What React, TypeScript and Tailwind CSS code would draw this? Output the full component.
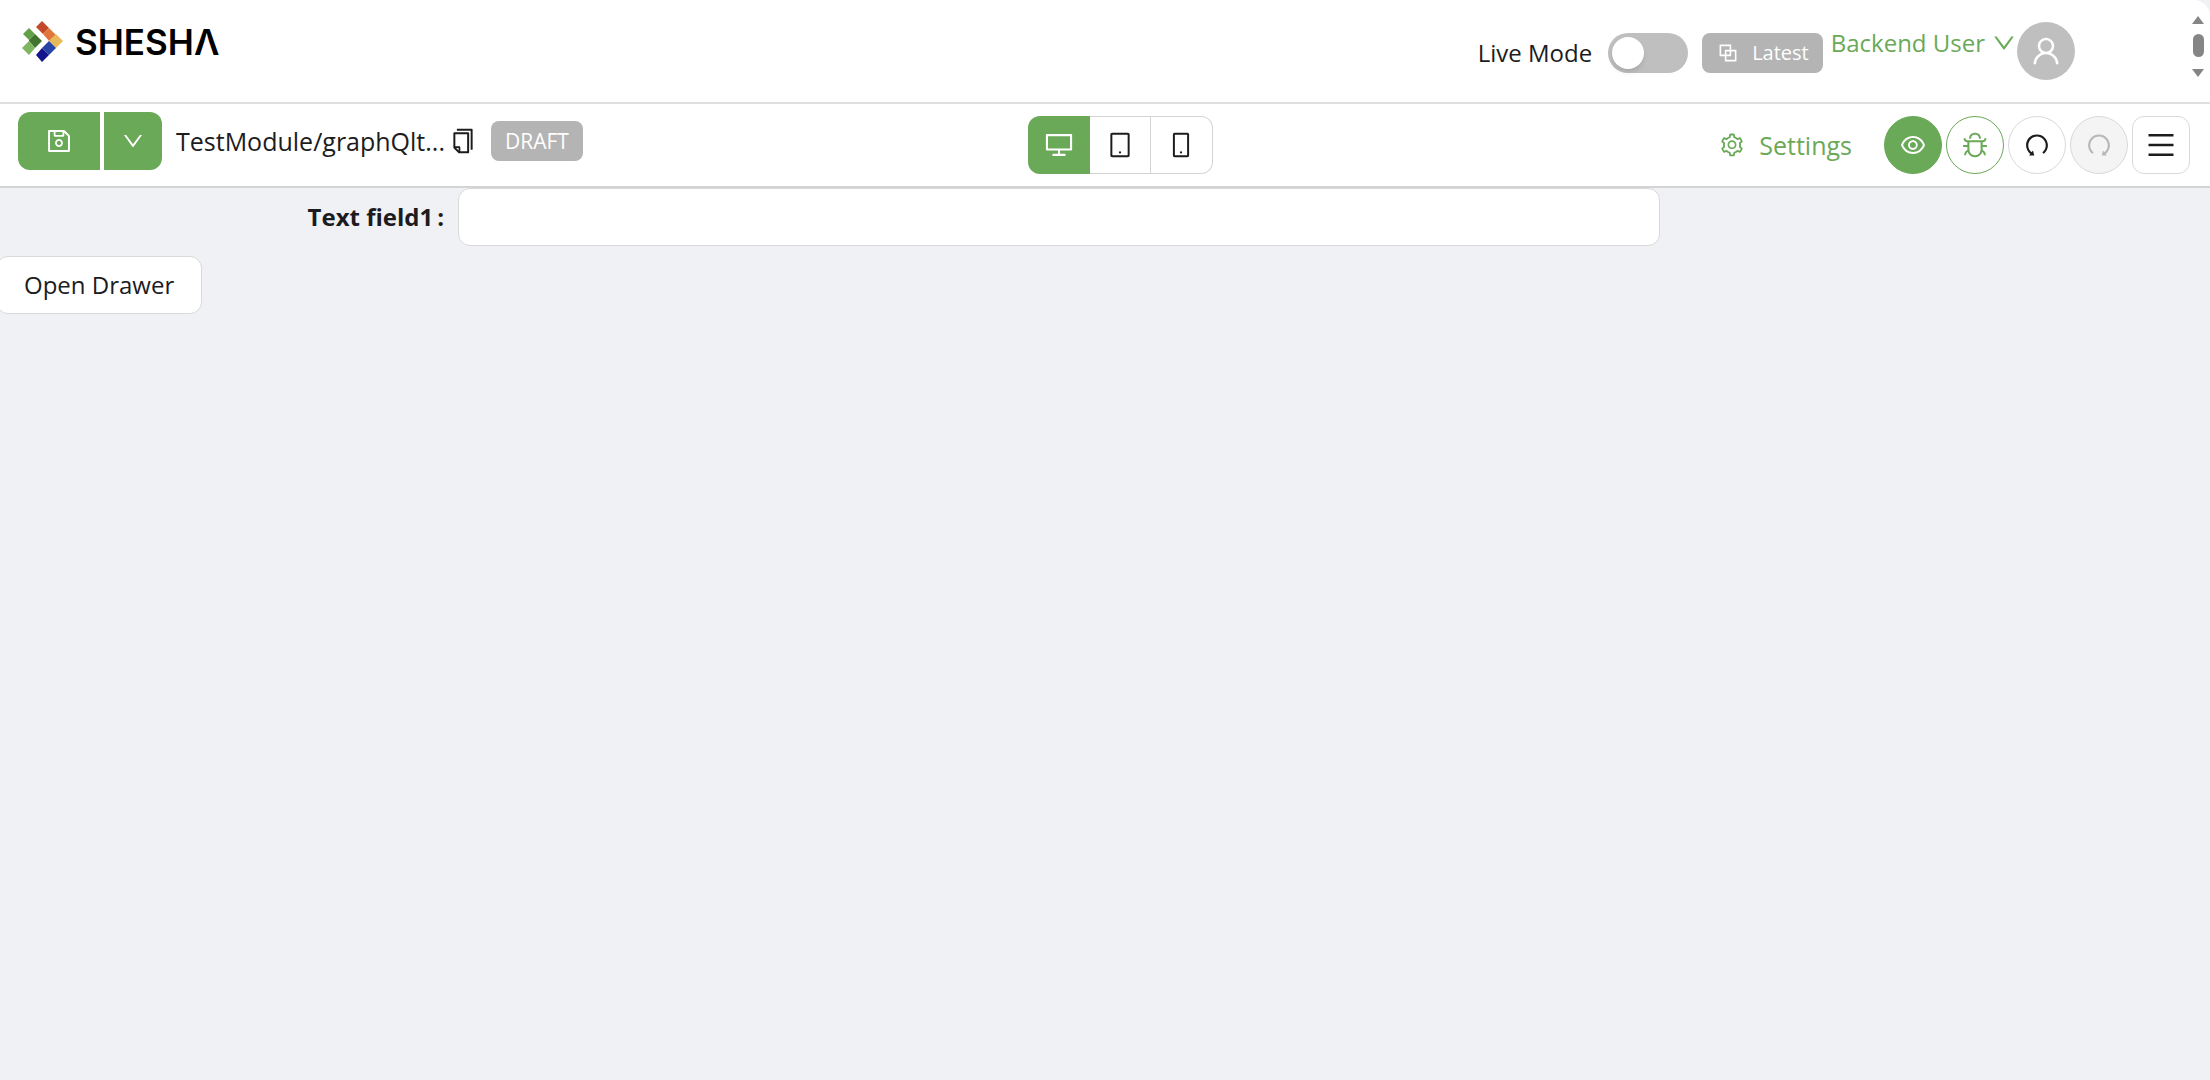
import React from 'react'
import {
  AiOutlineBlock,
  AiOutlineBug,
  AiOutlineCopy,
  AiOutlineDesktop,
  AiOutlineDown,
  AiOutlineEye,
  AiOutlineMenu,
  AiOutlineMobile,
  AiOutlineRedo,
  AiOutlineSave,
  AiOutlineSetting,
  AiOutlineTablet,
  AiOutlineUndo,
  AiOutlineUser,
} from 'react-icons/ai'

const Logo: React.FC = () => (
  <a href="#" className="flex items-center gap-3" aria-label="Shesha home">
    <svg className="size-[41px]" viewBox="0 0 41 41" aria-hidden="true">
      <path d="M1 13L7 7L13 13L7 19Z" fill="#62a04a" />
      <path d="M7 19L13 13L20 20L13 27L7 20Z" fill="#41742f" />
      <path d="M0 27L7 20L13 27L7 34Z" fill="#7db560" />
      <path d="M14 6L20 0L27 7L21 13Z" fill="#c4482a" />
      <path d="M21 13L27 7L34 14L27 20Z" fill="#e0763c" />
      <path d="M27 20L34 13L41 20L34 27Z" fill="#e8b95a" />
      <path d="M20 27L27 20L34 27L27 34Z" fill="#2743a6" />
      <path d="M14 34L20 27L27 34L20 41Z" fill="#14148c" />
    </svg>
    <span className="font-['Inter','Lato',sans-serif] text-[35px] leading-10 font-semibold text-black">SHESHΛ</span>
  </a>
)

const Header: React.FC = () => (
  <header className="flex h-[104px] items-start justify-between rounded-tr-2xl border-b-2 border-[#e0e0e0] bg-white pr-1.5 pl-[22px]">
    <div className="pt-[21px]">
      <Logo />
    </div>

    <div className="flex items-start text-[24px]">
      <div className="flex h-[106px] items-center">
        <label htmlFor="live-mode" className="mr-4">Live Mode</label>
        <input
          id="live-mode"
          type="checkbox"
          role="switch"
          className="mr-3.5 h-10 w-20 appearance-none rounded-full bg-[#bfbfbf] before:m-1 before:block before:size-8 before:rounded-full before:bg-white before:shadow-md checked:bg-[#6aa957]"
        />
        <span className="mr-2 flex h-10 items-center gap-3 rounded-lg bg-[#b4b4b4] px-3.5 text-[20px] text-white">
          <AiOutlineBlock className="size-6" />
          Latest
        </span>
      </div>
      <button type="button" className="mt-[25px] flex items-center gap-1.5 text-[#6aa957]">
        Backend User
        <AiOutlineDown className="size-[26px]" />
      </button>
      <span className="mt-[22px] flex size-[58px] items-center justify-center rounded-full bg-[#bfbfbf] text-white">
        <AiOutlineUser className="size-[34px]" />
      </span>

      {/* Scroll handle */}
      <div className="mt-4 ml-[117px] flex w-3 flex-col items-center justify-between gap-2.5">
        <svg className="h-2 w-3" viewBox="0 0 12 8" fill="#858585"><path d="M6 0L12 8H0Z" /></svg>
        <span className="h-[23px] w-[11px] rounded-full bg-[#858585]" />
        <svg className="mt-0.5 h-2 w-3" viewBox="0 0 12 8" fill="#858585"><path d="M6 8L12 0H0Z" /></svg>
      </div>
    </div>
  </header>
)

const roundButton = 'flex size-[58px] items-center justify-center rounded-full border'

const Toolbar: React.FC = () => (
  <div className="grid h-[84px] grid-cols-[1fr_auto_1fr] items-start border-b-2 border-[#d4d4d6] bg-white pr-5 pl-[18px]">
    <div className="flex items-center pt-2">
      <button type="button" aria-label="Save" className="mr-1 flex h-[58px] w-[82px] items-center justify-center rounded-l-xl bg-[#6aa957] text-white">
        <AiOutlineSave className="size-7" />
      </button>
      <button type="button" aria-label="More save options" className="mr-3.5 flex h-[58px] w-[58px] items-center justify-center rounded-r-xl bg-[#6aa957] text-white">
        <AiOutlineDown className="size-6" />
      </button>
      <span>TestModule/graphQlt...</span>
      <button type="button" aria-label="Copy name" className="mr-3.5 ml-1">
        <AiOutlineCopy className="size-7" />
      </button>
      <span className="flex h-10 items-center rounded-lg bg-[#b4b4b4] px-3.5 text-[21px] text-white">DRAFT</span>
    </div>

    <div className="flex pt-3 pl-8">
      <button type="button" aria-label="Desktop" className="flex h-[58px] w-[62px] items-center justify-center rounded-l-xl bg-[#6aa957] text-white">
        <AiOutlineDesktop className="size-[30px]" />
      </button>
      <button type="button" aria-label="Tablet" className="flex h-[58px] w-[61px] items-center justify-center border-y border-r border-[#d4d4d4]">
        <AiOutlineTablet className="size-7" />
      </button>
      <button type="button" aria-label="Mobile" className="flex h-[58px] w-[62px] items-center justify-center rounded-r-xl border-y border-r border-[#d4d4d4]">
        <AiOutlineMobile className="size-7" />
      </button>
    </div>

    <div className="flex items-center justify-end gap-1 pt-3">
      <button type="button" className="mr-7 flex items-center gap-3.5 text-[#6aa957]">
        <AiOutlineSetting className="size-[26px]" />
        Settings
      </button>
      <button type="button" aria-label="Preview" className={`${roundButton} border-[#6aa957] bg-[#6aa957] text-white`}>
        <AiOutlineEye className="size-7" />
      </button>
      <button type="button" aria-label="Debug" className={`${roundButton} border-[#6aa957] text-[#6aa957]`}>
        <AiOutlineBug className="size-7" />
      </button>
      <button type="button" aria-label="Undo" className={`${roundButton} border-[#d9d9d9]`}>
        <AiOutlineUndo className="size-7" />
      </button>
      <button type="button" aria-label="Redo" disabled className={`${roundButton} border-[#d9d9d9] bg-[#f4f4f4] text-[#b8b8b8]`}>
        <AiOutlineRedo className="size-7" />
      </button>
      <button type="button" aria-label="Menu" className="flex size-[58px] items-center justify-center rounded-xl border border-[#d9d9d9]">
        <AiOutlineMenu className="size-8" />
      </button>
    </div>
  </div>
)

const App: React.FC = () => {
  return (
    <div className="min-h-screen overflow-hidden bg-[#f0f1f5] font-['Open_Sans','Noto_Sans',sans-serif] text-[25px] leading-9 text-[#1c1c1e]">
      <Header />
      <Toolbar />

      {/* Form */}
      <main className="-mx-1 text-[24px]">
        <div className="grid grid-cols-[5fr_13fr_6fr] items-center">
          <label htmlFor="text-field1" className="flex justify-end gap-1 pr-3.5 font-bold">
            <span>Text field1</span>
            <span>:</span>
          </label>
          <input id="text-field1" type="text" className="h-[58px] rounded-xl border border-[#d9d9d9] bg-white px-4 outline-none" />
        </div>
        <button type="button" className="mt-2.5 h-[58px] rounded-xl border border-[#d9d9d9] bg-white px-[27px]">
          Open Drawer
        </button>
      </main>
    </div>
  )
}

export default App
